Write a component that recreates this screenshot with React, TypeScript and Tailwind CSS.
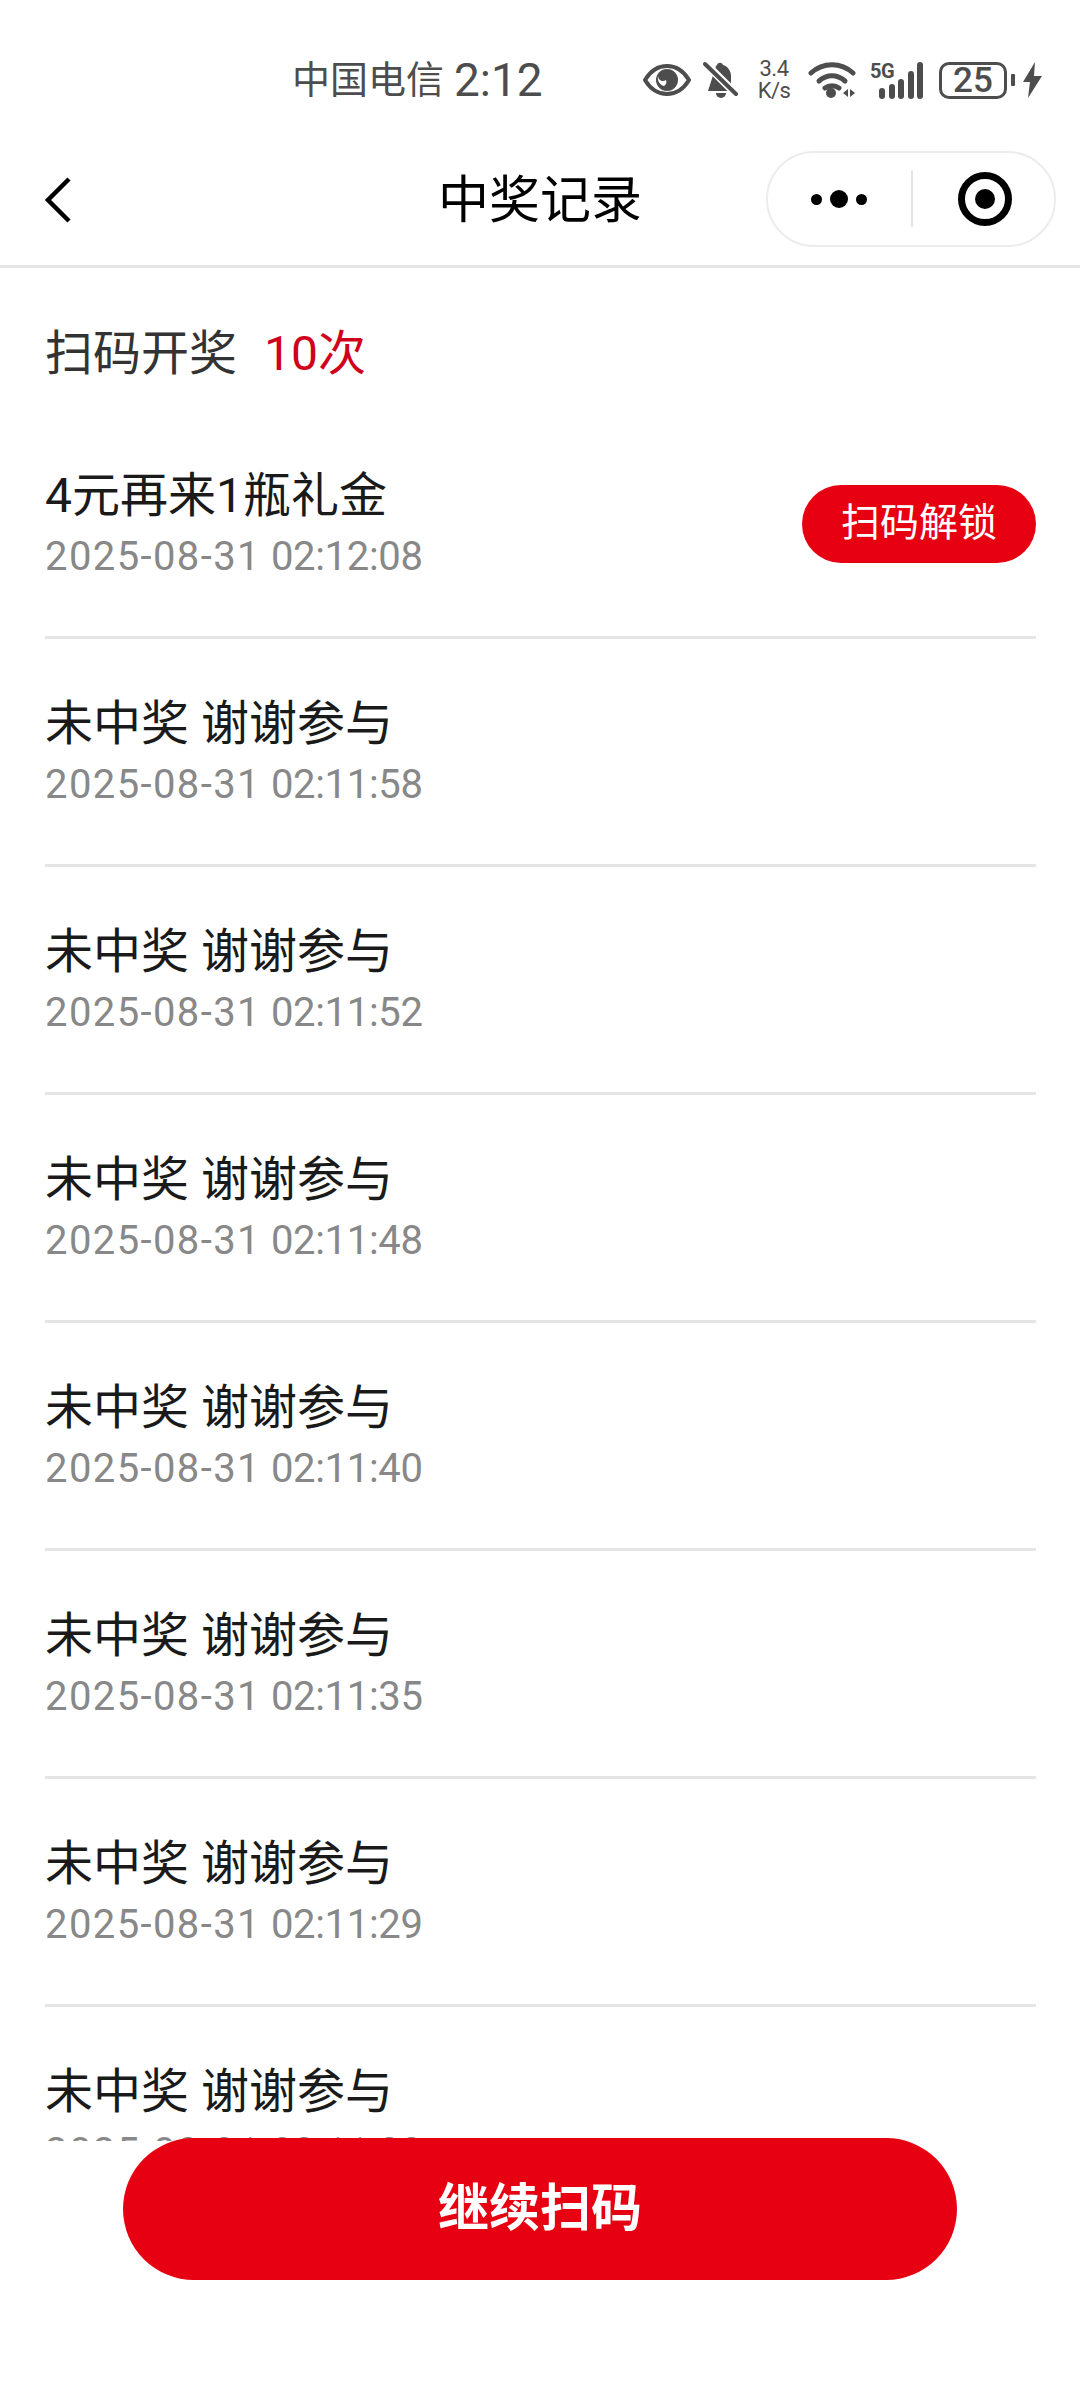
const records = [
  { title: "4元再来1瓶礼金", time: "2025-08-31 02:12:08", won: true },
  { title: "未中奖 谢谢参与", time: "2025-08-31 02:11:58", won: false },
  { title: "未中奖 谢谢参与", time: "2025-08-31 02:11:52", won: false },
  { title: "未中奖 谢谢参与", time: "2025-08-31 02:11:48", won: false },
  { title: "未中奖 谢谢参与", time: "2025-08-31 02:11:40", won: false },
  { title: "未中奖 谢谢参与", time: "2025-08-31 02:11:35", won: false },
  { title: "未中奖 谢谢参与", time: "2025-08-31 02:11:29", won: false },
  { title: "未中奖 谢谢参与", time: "2025-08-31 02:11:23", won: false },
];

const StatusIcons = () => (
  <div className="flex items-center text-[#4d4d4d]">
    {/* eye */}
    <svg width="48" height="32" viewBox="0 0 48 32">
      <path d="M2 16C8 6 15 2 24 2s16 4 22 14c-6 10-13 14-22 14S8 26 2 16Z" fill="none" stroke="currentColor" strokeWidth="4" strokeLinejoin="round" />
      <circle cx="24" cy="16" r="11" fill="currentColor" />
      <path d="M15 12a5 5 0 0 0 8 4c1 2 0 5-2 6-4-1-7-5-6-10Z" fill="#fff" />
    </svg>
    {/* muted bell */}
    <svg width="36" height="38" viewBox="0 0 36 38" className="ml-[12px]">
      <path d="M3 30h26l-3-4V15c0-6-4-10-8-11-1-3-5-3-6 0l-1 1Z" fill="currentColor" transform="translate(2 0)" />
      <path d="M3 3l30 30" stroke="#fff" strokeWidth="8" />
      <path d="M2 3l31 30" stroke="currentColor" strokeWidth="4" strokeLinecap="round" />
      <path d="M13 32h10a5 5 0 0 1-10 0Z" fill="currentColor" />
    </svg>
    {/* net speed */}
    <div className="ml-[17px] flex w-[36px] flex-col items-center font-['Roboto'] text-[22px] leading-[22px] tracking-[-0.5px]">
      <span>3.4</span>
      <span>K/s</span>
    </div>
    {/* wifi */}
    <svg width="48" height="36" viewBox="0 0 48 36" className="ml-[16px]">
      <path d="M3 11c12-11 30-11 42 0" fill="none" stroke="currentColor" strokeWidth="5" strokeLinecap="round" />
      <path d="M11 19c8-7 18-7 26 0" fill="none" stroke="currentColor" strokeWidth="5" strokeLinecap="round" />
      <path d="M17 26c4-3 10-3 14 0" fill="none" stroke="currentColor" strokeWidth="5" strokeLinecap="round" />
      <circle cx="23" cy="31" r="5" fill="currentColor" />
      <path d="M35 31l5-4v8ZM47 31l-5-4v8Z" fill="currentColor" />
    </svg>
    {/* 5G signal */}
    <div className="relative ml-[14px] h-[37px] w-[54px]">
      <span className="absolute left-0 top-[-1px] font-['Roboto'] text-[20px] font-bold leading-[20px] tracking-[-0.5px]">5G</span>
      <svg width="46" height="37" viewBox="0 0 46 37" className="absolute left-[8px] top-0">
        <rect x="1" y="26" width="6" height="11" rx="3" fill="currentColor" />
        <rect x="11" y="22" width="6" height="15" rx="3" fill="currentColor" />
        <rect x="20" y="17" width="6" height="20" rx="3" fill="currentColor" />
        <rect x="30" y="9" width="6" height="28" rx="3" fill="currentColor" />
        <rect x="39" y="0" width="6" height="37" rx="3" fill="currentColor" />
      </svg>
    </div>
    {/* battery */}
    <div className="ml-[15px] flex h-[37px] w-[68px] items-center justify-center rounded-[10px] border-[3px] border-[#4d4d4d] font-['Roboto'] text-[35px] font-medium leading-none">
      25
    </div>
    <div className="ml-[4px] h-[12px] w-[4px] rounded-[1px] bg-[#4d4d4d]" />
    <svg width="19" height="36" viewBox="0 0 19 36" className="ml-[8px]">
      <path d="M12 0 0 20h7L5 36 19 14h-8Z" fill="currentColor" />
    </svg>
  </div>
);

export default function App() {
  return (
    <div className="flex h-[2400px] w-[1080px] flex-col overflow-hidden bg-white font-['Roboto','Noto_Sans_CJK_SC',sans-serif]">
      {/* status bar */}
      <div className="flex h-[116px] shrink-0 items-center justify-between pl-[292px] pr-[38px] pt-[44px]">
        <div className="flex items-center text-[#4d4d4d]">
          <span className="text-[38px] leading-none">中国电信</span>
          <span className="ml-[10px] text-[46px] font-normal leading-none">2:12</span>
        </div>
        <StatusIcons />
      </div>

      {/* nav */}
      <div className="relative flex h-[152px] shrink-0 items-center justify-center border-b-[3px] border-[#e6e6e6] pt-[19px]">
        <svg width="28" height="48" viewBox="0 0 28 48" className="absolute left-[44px] top-[60px]">
          <path d="M25 3 4 24l21 21" fill="none" stroke="#000" strokeWidth="4.5" />
        </svg>
        <span className="text-[51px] leading-none text-black">中奖记录</span>
        <div className="absolute left-[766px] top-[35px] flex h-[96px] w-[290px] items-center rounded-full border-[2px] border-[#ececec]">
          <div className="flex w-[143px] items-center justify-center gap-[8px] pr-[2px]">
            <span className="h-[11px] w-[11px] rounded-full bg-black" />
            <span className="h-[18px] w-[18px] rounded-full bg-black" />
            <span className="h-[11px] w-[11px] rounded-full bg-black" />
          </div>
          <div className="h-[56px] w-[2px] bg-[#e2e2e2]" />
          <div className="flex flex-1 items-center justify-center pl-[2px]">
            <div className="flex h-[54px] w-[54px] items-center justify-center rounded-full border-[7px] border-black">
              <div className="h-[20px] w-[20px] rounded-full bg-black" />
            </div>
          </div>
        </div>
      </div>

      {/* list */}
      <div className="flex-1 overflow-hidden">
        <div className="flex h-[143px] items-center pt-[29px] pl-[45px] text-[48px] leading-none">
          <span className="text-[#333333]">扫码开奖</span>
          <span className="ml-[27px] text-[#d0021b]">10次</span>
        </div>
        {records.map((r, i) => (
          <div key={i} className="ml-[45px] mr-[44px] flex h-[228px] items-center justify-between border-b-[3px] border-[#e5e5e5]">
            <div className="pt-[5px]">
              <div className="text-[48px] leading-[60px] text-[#1a1a1a]">{r.title}</div>
              <div className="mt-[1px] text-[40px] leading-[60px] text-[#888888]">
                <span className="tracking-[1.4px]">{r.time.split(" ")[0]}</span>{" "}
                <span className="tracking-[-0.3px]">{r.time.split(" ")[1]}</span>
              </div>
            </div>
            {r.won && (
              <div className="-ml-[2px] flex h-[78px] w-[234px] items-center justify-center rounded-full bg-[#e60012] text-[39px] text-white">
                扫码解锁
              </div>
            )}
          </div>
        ))}
      </div>

      {/* footer */}
      <div className="h-[259px] shrink-0 bg-white">
        <div className="mx-auto -mt-[3px] flex h-[142px] w-[834px] items-center justify-center rounded-full bg-[#e60012] text-[51px] font-bold text-white">
          继续扫码
        </div>
      </div>
    </div>
  );
}
